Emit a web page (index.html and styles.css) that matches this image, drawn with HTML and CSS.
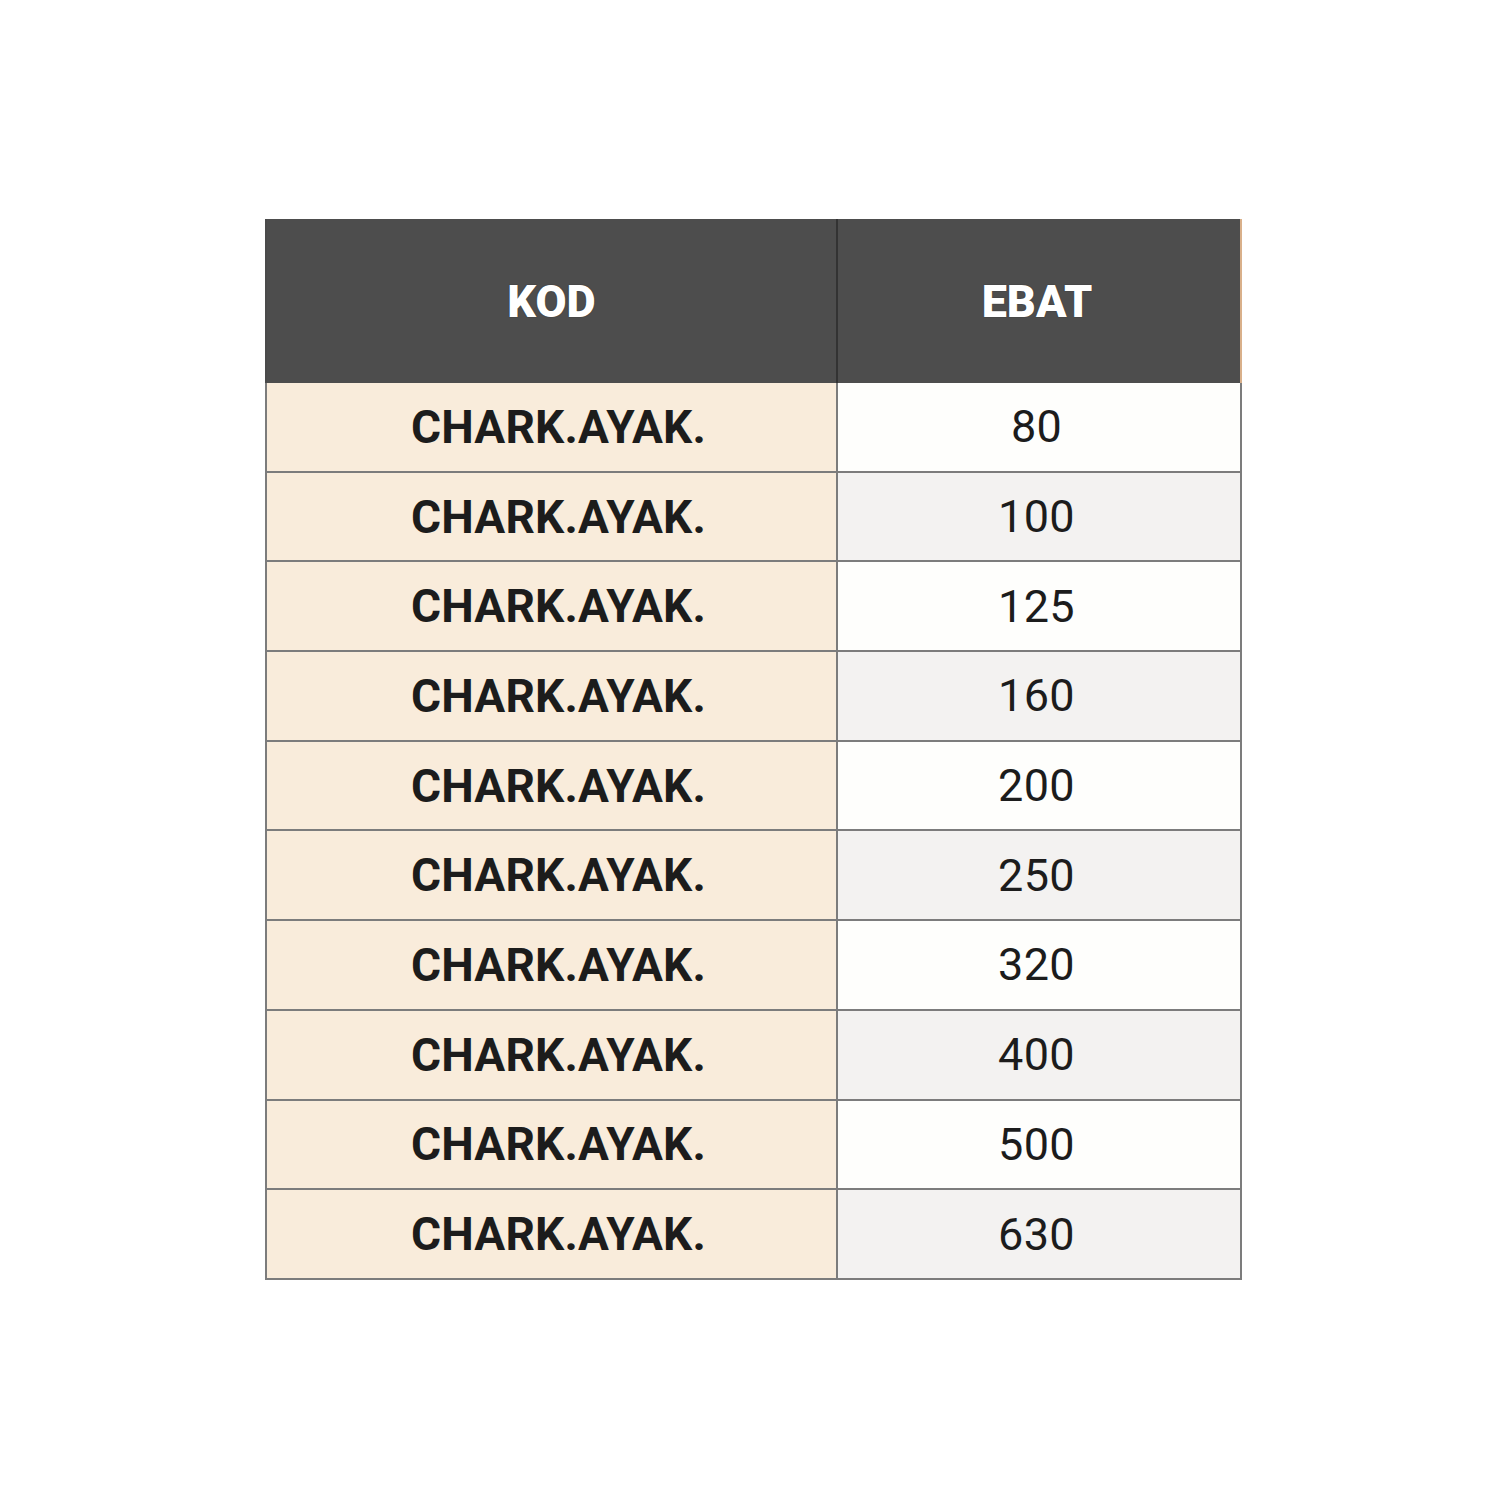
FILE: index.html
```html
<!DOCTYPE html>
<html lang="tr">
<head>
<meta charset="utf-8">
<title>KOD / EBAT</title>
<link rel="stylesheet" href="styles.css">
</head>
<body>
<div class="page">
  <table class="spec">
    <thead>
      <tr><th class="c-kod">KOD</th><th class="c-ebat">EBAT</th></tr>
    </thead>
    <tbody>
      <tr><td class="kod">CHARK.AYAK.</td><td class="ebat">80</td></tr>
      <tr><td class="kod">CHARK.AYAK.</td><td class="ebat">100</td></tr>
      <tr><td class="kod">CHARK.AYAK.</td><td class="ebat">125</td></tr>
      <tr><td class="kod">CHARK.AYAK.</td><td class="ebat">160</td></tr>
      <tr><td class="kod">CHARK.AYAK.</td><td class="ebat">200</td></tr>
      <tr><td class="kod">CHARK.AYAK.</td><td class="ebat">250</td></tr>
      <tr><td class="kod">CHARK.AYAK.</td><td class="ebat">320</td></tr>
      <tr><td class="kod">CHARK.AYAK.</td><td class="ebat">400</td></tr>
      <tr><td class="kod">CHARK.AYAK.</td><td class="ebat">500</td></tr>
      <tr><td class="kod">CHARK.AYAK.</td><td class="ebat">630</td></tr>
    </tbody>
  </table>
</div>
</body>
</html>
```

FILE: styles.css
```css
html, body {
  margin: 0;
  padding: 0;
  background: #ffffff;
}
.page {
  padding: 219px 0 0 265px;
}
.spec {
  border-collapse: collapse;
  width: 977px;
  table-layout: fixed;
  font-family: Roboto, "Liberation Sans", sans-serif;
  color: #1c1c1c;
  border-bottom: 2px solid #8a8a8a;
}
.spec th {
  background: #4d4d4d;
  color: #ffffff;
  height: 164px;
  padding: 0;
  font-size: 45px;
  font-weight: 900;
  text-shadow: 0 0 1px #1a1a1a;
  text-align: center;
  border-left: 2px solid #4a4a4a;
  border-right: 2px solid #4a4a4a;
}
.spec th.c-kod {
  width: 569px;
  border-right: 2px solid #333;
}
.spec th.c-ebat {
  border-right: 2px solid #d9b08a;
  padding-right: 4px;
}
.spec td {
  height: 87.7px;
  padding: 0;
  text-align: center;
  vertical-align: middle;
  border: 2px solid #7c7c7c;
  border-top: 2px solid #888;
}
.spec tbody tr:first-child td {
  border-top: none;
}
.spec td.kod {
  background: #f9ecdb;
  font-weight: 700;
  font-size: 46px;
  padding-left: 14px;
  letter-spacing: 0.2px;
}
.spec td.ebat {
  background: #fefefc;
  font-weight: 400;
  font-size: 45px;
  letter-spacing: 0.3px;
  padding-right: 5px;
}
.spec tbody tr:nth-child(even) td.ebat {
  background: #f3f2f1;
}
```
